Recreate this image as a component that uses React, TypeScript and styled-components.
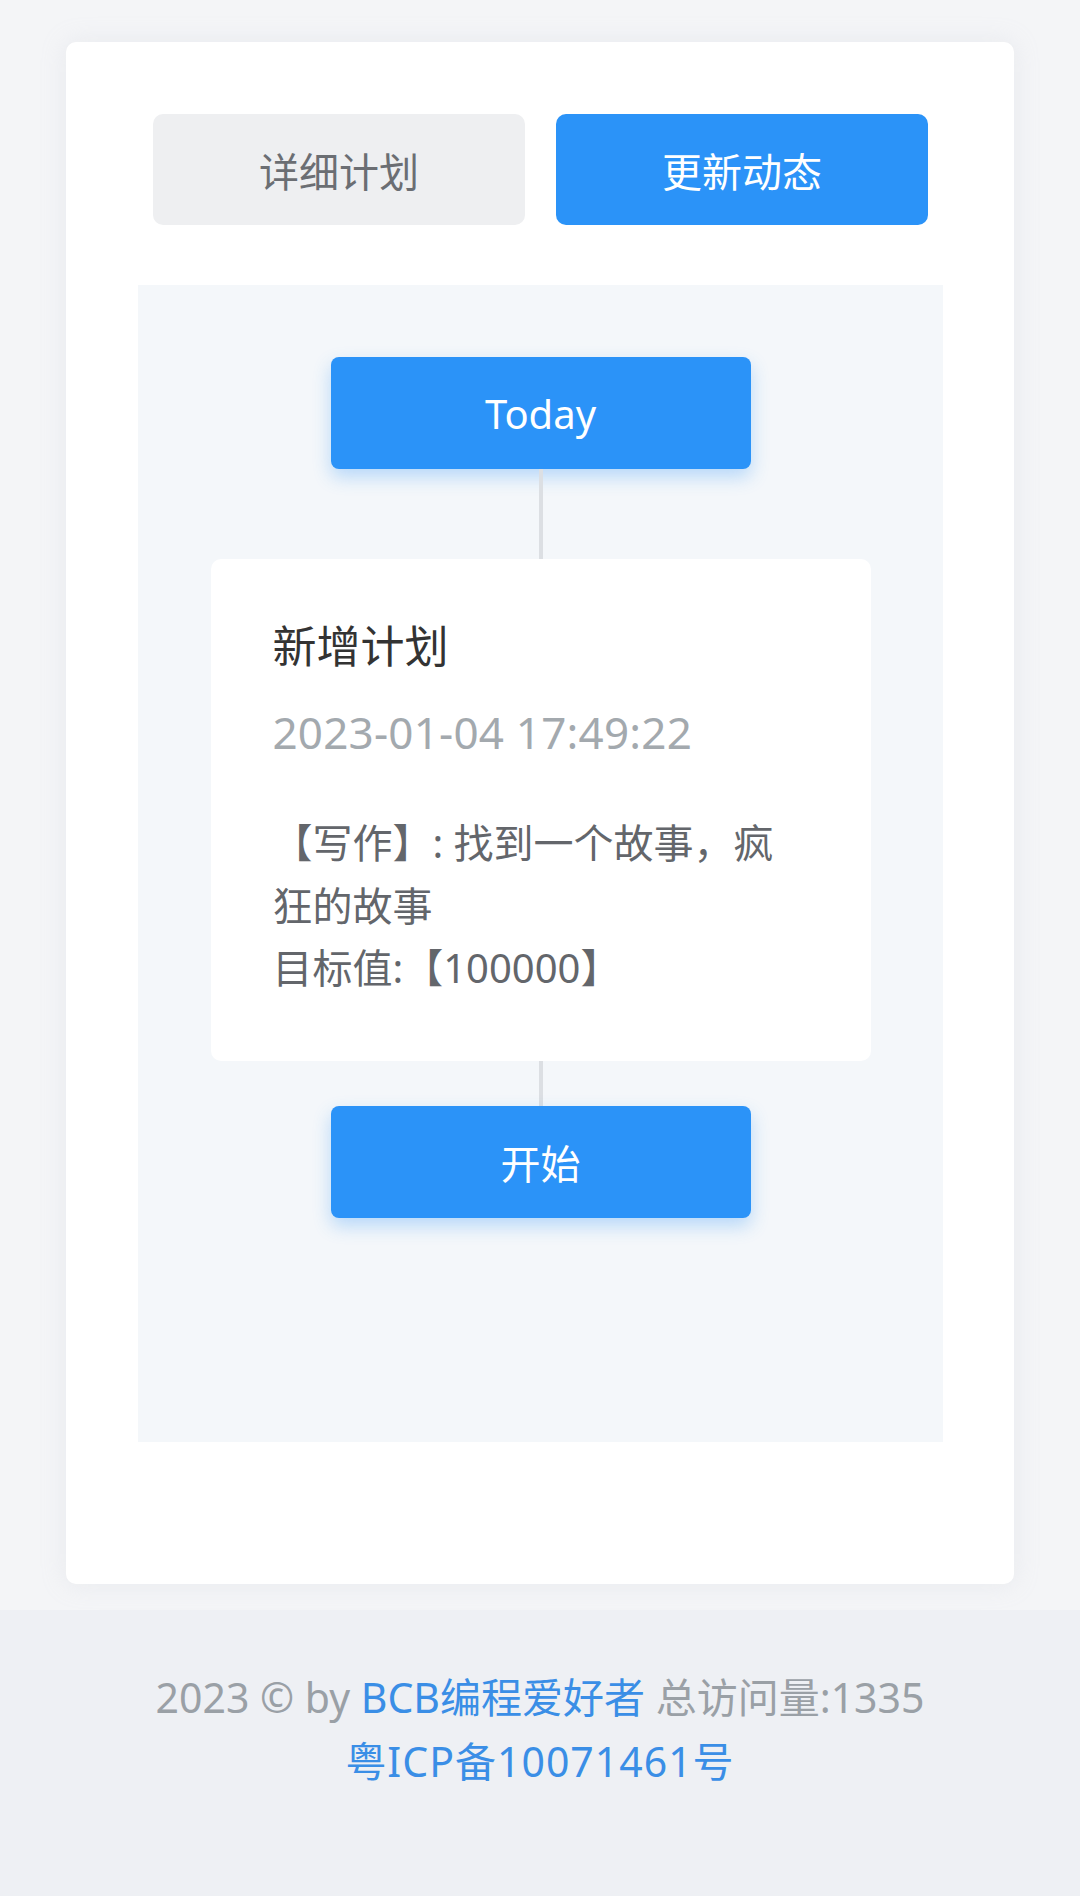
import React from 'react';
import styled, { createGlobalStyle } from 'styled-components';

const GlobalStyle = createGlobalStyle`
  html, body {
    margin: 0;
    padding: 0;
  }
  body {
    background: #eef0f4;
    font-family: "Noto Sans", "Noto Sans CJK SC", sans-serif;
  }
`;

const Main = styled.section`
  background: #f4f5f7;
  padding: 42px 66px 26px;
`;

const Card = styled.div`
  background: #ffffff;
  border-radius: 10px;
  box-shadow: 0 0 24px rgba(200, 205, 215, 0.25);
  padding: 72px 71px 142px 72px;
`;

const Tabs = styled.div`
  display: grid;
  grid-template-columns: 1fr 1fr;
  gap: 31px;
  padding: 0 15px;
  margin-bottom: 60px;
`;

const Tab = styled.button<{ $active?: boolean }>`
  height: 111px;
  border: none;
  border-radius: 10px;
  font-family: inherit;
  font-size: 40px;
  background: ${(p) => (p.$active ? '#2b93f8' : '#eeeff1')};
  color: ${(p) => (p.$active ? '#ffffff' : '#6b6e73')};
  cursor: pointer;
`;

const Timeline = styled.div`
  background: #f4f7fa;
  height: 1157px;
  box-sizing: border-box;
  padding-top: 72px;
  display: flex;
  flex-direction: column;
  align-items: center;
`;

const Node = styled.div`
  width: 420px;
  height: 112px;
  border-radius: 8px;
  background: #2b93f8;
  color: #ffffff;
  font-size: 40px;
  display: flex;
  align-items: center;
  justify-content: center;
  box-shadow: 0 8px 18px rgba(43, 147, 248, 0.3);
`;

const Connector = styled.div<{ $h: number }>`
  width: 4px;
  height: ${(p) => p.$h}px;
  background: #dcdfe3;
`;

const Entry = styled.div`
  width: 660px;
  box-sizing: border-box;
  background: #ffffff;
  border-radius: 10px;
  padding: 56px 70px 61px 62px;
`;

const EntryTitle = styled.div`
  font-size: 44px;
  line-height: 62px;
  color: #333333;
`;

const EntryTime = styled.div`
  font-size: 44px;
  line-height: 60px;
  letter-spacing: 0.2px;
  color: #a3a9ae;
  margin-top: 25px;
`;

const EntryBody = styled.div`
  font-size: 40px;
  line-height: 62.5px;
  color: #63666b;
  margin-top: 50px;
`;

const Footer = styled.footer`
  padding-top: 55px;
  min-height: 231px;
  box-sizing: border-box;
  text-align: center;
  font-size: 41px;
  line-height: 64px;
  color: #9aa0a6;
`;

const FooterLink = styled.a<{ $wide?: boolean }>`
  color: #3a8ee6;
  text-decoration: none;
  letter-spacing: ${(p) => (p.$wide ? '1px' : 'normal')};
`;

export default function App() {
  return (
    <>
      <GlobalStyle />
      <Main>
        <Card>
          <Tabs>
            <Tab>详细计划</Tab>
            <Tab $active>更新动态</Tab>
          </Tabs>
          <Timeline>
            <Node>Today</Node>
            <Connector $h={90} />
            <Entry>
              <EntryTitle>新增计划</EntryTitle>
              <EntryTime>2023-01-04 17:49:22</EntryTime>
              <EntryBody>
                <div>【写作】: 找到一个故事，疯狂的故事</div>
                <div>目标值:【100000】</div>
              </EntryBody>
            </Entry>
            <Connector $h={45} />
            <Node>开始</Node>
          </Timeline>
        </Card>
      </Main>
      <Footer>
        <div>
          2023 © by <FooterLink href="#">BCB编程爱好者</FooterLink> 总访问量:1335
        </div>
        <div>
          <FooterLink href="#" $wide>
            粤ICP备10071461号
          </FooterLink>
        </div>
      </Footer>
    </>
  );
}
